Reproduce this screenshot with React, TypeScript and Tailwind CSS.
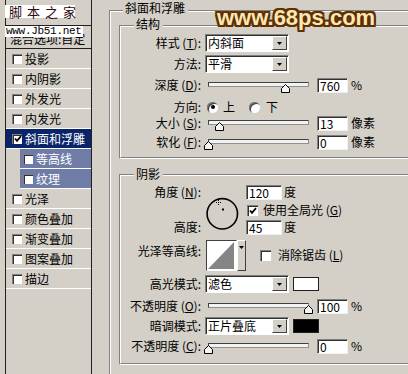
import React from "react";

type Item = { t: string; sel?: boolean; sub?: boolean; checked?: boolean };

const items: Item[] = [
  { t: "投影" },
  { t: "内阴影" },
  { t: "外发光" },
  { t: "内发光" },
  { t: "斜面和浮雕", sel: true, checked: true },
  { t: "等高线", sub: true },
  { t: "纹理", sub: true },
  { t: "光泽" },
  { t: "颜色叠加" },
  { t: "渐变叠加" },
  { t: "图案叠加" },
  { t: "描边" },
];

function Box({ checked = false, size = "w-[10px] h-[10px]" }: { checked?: boolean; size?: string }) {
  return (
    <div
      className={`${size} shrink-0 bg-white shadow-[inset_1px_1px_0_#808080,inset_2px_2px_0_#303030] flex items-center justify-center`}
    >
      {checked && (
        <svg width="8" height="8" viewBox="0 0 8 8" className="ml-[1px] mt-[1px]">
          <path d="M1 3.5 L3 5.8 L7 1.2" stroke="#000" strokeWidth="1.8" fill="none" />
        </svg>
      )}
    </div>
  );
}

function Arrow() {
  return (
    <svg width="5" height="3" viewBox="0 0 5 3">
      <polygon points="0,0 5,0 2.5,3" fill="#000" />
    </svg>
  );
}

function U({ children }: { children: React.ReactNode }) {
  return <span className="underline underline-offset-[1px]">{children}</span>;
}

function Label({ children }: { children: React.ReactNode }) {
  return <div className="w-[80px] shrink-0 text-right whitespace-nowrap">{children}</div>;
}

function Row({ className = "", children }: { className?: string; children: React.ReactNode }) {
  return <div className={`flex items-center h-[16px] whitespace-nowrap ${className}`}>{children}</div>;
}

function Select({ text }: { text: string }) {
  return (
    <div className="ml-[4px] w-[84px] h-[18px] shrink-0 bg-white flex items-center border border-t-[#808080] border-l-[#808080] border-r-white border-b-white shadow-[inset_1px_1px_0_#303030]">
      <span className="flex-1 pl-[2px] leading-[16px]">{text}</span>
      <div className="mr-[1px] w-[15px] h-[14px] bg-[#d4d0c8] border border-t-white border-l-white border-r-[#404040] border-b-[#404040] flex items-center justify-center">
        <Arrow />
      </div>
    </div>
  );
}

function Num({ v, w = "w-[31px] ml-[4px]" }: { v: string; w?: string }) {
  return (
    <div
      className={`${w} h-[15px] shrink-0 bg-white border border-t-[#808080] border-l-[#808080] border-r-[#f0f0f0] border-b-[#f0f0f0] shadow-[inset_1px_1px_0_#303030] pl-[2px] text-[12px] leading-[14px]`}
    >
      {v}
    </div>
  );
}

function Slider({ pos }: { pos: number }) {
  return (
    <div className="relative ml-[3px] w-[109px] h-[16px] shrink-0">
      <div className="absolute left-[4px] top-[5px] w-[101px] h-[5px] bg-[#f2f2f2] border border-t-[#404040] border-l-[#404040] border-r-[#909090] border-b-[#909090]" />
      <svg className="absolute top-[7px]" style={{ left: pos }} width="9" height="9" viewBox="0 0 9 9">
        <polygon points="4.5,0.5 8.5,4.5 8.5,8.5 0.5,8.5 0.5,4.5" fill="#f4f4f4" stroke="#000" strokeWidth="1" />
      </svg>
    </div>
  );
}

function Radio({ on = false, cls = "" }: { on?: boolean; cls?: string }) {
  return (
    <div
      className={`${cls} w-[11px] h-[11px] shrink-0 rounded-full bg-white shadow-[inset_1px_1px_0_#808080,inset_2px_2px_0_#404040] flex items-center justify-center`}
    >
      {on && <div className="w-[4px] h-[4px] rounded-full bg-black" />}
    </div>
  );
}

function Group({
  title,
  className,
  innerClassName,
  titleClass,
  children,
}: {
  title: string;
  className: string;
  innerClassName: string;
  titleClass: string;
  children: React.ReactNode;
}) {
  return (
    <div className={`relative shrink-0 border-t border-l border-b border-t-[#808080] border-l-[#808080] border-b-white ${className}`}>
      <div className={`border-t border-l border-b border-t-white border-l-white border-b-[#808080] ${innerClassName}`}>
        {children}
      </div>
      <div className={`absolute ${titleClass} bg-[#d4d0c8] pl-[2px] pr-[3px] leading-[16px] whitespace-nowrap`}>{title}</div>
    </div>
  );
}

export default function App() {
  return (
    <div className="relative w-[408px] h-[374px] overflow-hidden bg-[#d4d0c8] flex text-[12px] leading-[16px] text-black font-['Noto_Sans_CJK_SC','Noto_Sans',sans-serif]">
      {/* Left style list */}
      <div className="ml-[5px] w-[87px] shrink-0 border-l border-r border-[#202020] flex flex-col">
        <div className="h-[25px] shrink-0" />
        <div className="h-[24px] shrink-0 border-t border-b border-[#202020] pt-[5px] pl-[4px] whitespace-nowrap">
          混合选项:自定
        </div>
        {items.map((it) =>
          it.sub ? (
            <div key={it.t} className="h-[20px] shrink-0 flex">
              <div className="ml-[14px] flex-1 bg-[#6f7ca8] border-b border-white flex items-center pl-[3px] gap-[3px] text-white">
                <Box checked={it.checked} />
                <span>{it.t}</span>
              </div>
            </div>
          ) : (
            <div
              key={it.t}
              className={`h-[20px] shrink-0 border-b border-white flex items-center pl-[6px] gap-[3px] ${
                it.sel ? "bg-[#0a246a] text-white" : ""
              }`}
            >
              <Box checked={it.checked} />
              <span className="whitespace-nowrap">{it.t}</span>
            </div>
          )
        )}
      </div>

      {/* Right panel */}
      <div className="ml-[17px] w-[330px] shrink-0">
        <Group
          title="斜面和浮雕"
          className="mt-[10px] w-[330px] h-[420px]"
          innerClassName="h-[418px]"
          titleClass="top-[-11px] left-[13px]"
        >
          <Group
            title="结构"
            className="ml-[8px] mt-[13px] w-[320px]"
            innerClassName="pb-[7px]"
            titleClass="top-[-10px] left-[14px]"
          >
            <Row className="mt-[8px]">
              <Label>
                样式 (<U>T</U>):
              </Label>
              <Select text="内斜面" />
            </Row>
            <Row className="mt-[5px]">
              <Label>方法:</Label>
              <Select text="平滑" />
            </Row>
            <Row className="mt-[5px]">
              <Label>
                深度 (<U>D</U>):
              </Label>
              <Slider pos={77} />
              <Num v="760" />
              <span className="ml-[3px]">%</span>
            </Row>
            <Row className="mt-[6px]">
              <Label>方向:</Label>
              <Radio on cls="ml-[6px]" />
              <span className="ml-[5px]">上</span>
              <Radio cls="ml-[14px]" />
              <span className="ml-[6px]">下</span>
            </Row>
            <Row>
              <Label>
                大小 (<U>S</U>):
              </Label>
              <Slider pos={11} />
              <Num v="13" />
              <span className="ml-[3px]">像素</span>
            </Row>
            <Row className="mt-[3px]">
              <Label>
                软化 (<U>F</U>):
              </Label>
              <Slider pos={0} />
              <Num v="0" />
              <span className="ml-[3px]">像素</span>
            </Row>
          </Group>

          <Group
            title="阴影"
            className="ml-[8px] mt-[15px] w-[320px]"
            innerClassName="pb-[9px]"
            titleClass="top-[-9px] left-[14px]"
          >
            {/* angle / altitude block */}
            <div className="mt-[8px] flex items-start">
              <div className="flex flex-col">
                <Row>
                  <Label>
                    角度 (<U>N</U>):
                  </Label>
                </Row>
                <Row className="mt-[19px]">
                  <Label>高度:</Label>
                </Row>
              </div>
              <svg className="ml-[5px] mt-[13px] shrink-0" width="33" height="34" viewBox="0 0 33 34">
                <circle cx="16.3" cy="16.8" r="15.2" fill="none" stroke="#000" strokeWidth="1.6" />
                <rect x="16" y="11.5" width="2" height="2" fill="#000" />
                <rect x="12" y="3" width="1" height="1" fill="#000" />
                <rect x="12" y="7" width="1" height="1" fill="#000" />
                <rect x="10" y="5" width="1" height="1" fill="#000" />
                <rect x="14" y="5" width="1" height="1" fill="#000" />
                <rect x="12" y="5" width="1" height="1" fill="#000" />
              </svg>
              <div className="ml-[7px] flex flex-col">
                <Row>
                  <Num v="120" w="w-[36px]" />
                  <span className="ml-[2px]">度</span>
                </Row>
                <Row className="mt-[2px]">
                  <div className="ml-[1px]">
                    <Box checked size="w-[11px] h-[11px]" />
                  </div>
                  <span className="ml-[5px]">
                    使用全局光 (<U>G</U>)
                  </span>
                </Row>
                <Row className="mt-[1px]">
                  <Num v="45" w="w-[36px]" />
                  <span className="ml-[2px]">度</span>
                </Row>
              </div>
            </div>

            {/* gloss contour */}
            <div className="mt-[5px] flex items-start">
              <Row className="mt-[3px]">
                <Label>光泽等高线:</Label>
              </Row>
              <div className="ml-[5px] flex shrink-0">
                <div className="w-[31px] h-[31px] bg-white border border-t-[#404040] border-l-[#404040] border-r-white border-b-white p-[1px]">
                  <svg width="27" height="27" viewBox="0 0 27 27" className="block">
                    <rect x="0" y="0" width="27" height="27" fill="#fff" />
                    <polygon points="0,27 26,0 26,27" fill="#858585" />
                  </svg>
                </div>
                <div className="w-[9px] h-[31px] bg-[#d4d0c8] border border-t-white border-l-white border-r-[#404040] border-b-[#404040] flex justify-center pt-[5px]">
                  <div className="h-[3px] flex">
                    <Arrow />
                  </div>
                </div>
              </div>
              <Row className="mt-[7px] ml-[14px]">
                <Box size="w-[11px] h-[11px]" />
                <span className="ml-[7px]">
                  消除锯齿 (<U>L</U>)
                </span>
              </Row>
            </div>

            <Row className="mt-[5px]">
              <Label>高光模式:</Label>
              <Select text="滤色" />
              <div className="ml-[4px] w-[26px] h-[14px] shrink-0 bg-white border border-[#202020]" />
            </Row>
            <Row className="mt-[6px]">
              <Label>
                不透明度 (<U>O</U>):
              </Label>
              <Slider pos={100} />
              <Num v="100" />
              <span className="ml-[3px]">%</span>
            </Row>
            <Row className="mt-[4px]">
              <Label>暗调模式:</Label>
              <Select text="正片叠底" />
              <div className="ml-[4px] w-[26px] h-[14px] shrink-0 bg-black border border-[#202020]" />
            </Row>
            <Row className="mt-[4px]">
              <Label>
                不透明度 (<U>C</U>):
              </Label>
              <Slider pos={0} />
              <Num v="0" />
              <span className="ml-[3px]">%</span>
            </Row>
          </Group>
        </Group>
      </div>

      {/* watermarks (overlays) */}
      <div className="absolute left-[5px] top-[5px] w-[70px] h-[13px] bg-white pl-[4px] text-[13px] leading-[13px] tracking-[5px] text-[#2a0a12] whitespace-nowrap">
        脚本之家
      </div>
      <div className="absolute left-[5px] top-[26px] h-[11px] bg-white px-[1px] text-[11px] leading-[11px] tracking-[-0.3px] text-black font-['Liberation_Mono',monospace] whitespace-nowrap">
        www.Jb51.net
      </div>
      <div className="absolute left-[217px] top-[5px] text-[22px] leading-[26px] font-bold text-[#fbe8b4] font-['Liberation_Sans',sans-serif] whitespace-nowrap [text-shadow:2px_0_#5e3004,-2px_0_#5e3004,0_2px_#5e3004,0_-2px_#5e3004,2px_2px_#5e3004,-2px_-2px_#5e3004,2px_-2px_#5e3004,-2px_2px_#5e3004,1px_0_#b8731c,-1px_0_#b8731c]">
        www.68ps.com
      </div>
    </div>
  );
}
